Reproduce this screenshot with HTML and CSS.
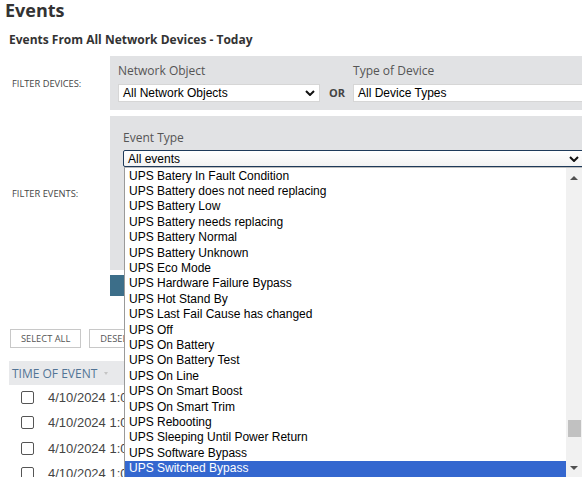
FILE: index.html
```html
<!DOCTYPE html>
<html>
<head>
<meta charset="utf-8">
<title>Events</title>
<link rel="stylesheet" href="styles.css">
</head>
<body>
<h1 class="title">Events</h1>
<h2 class="subtitle">Events From All Network Devices - Today</h2>

<div class="filter-row devices">
  <div class="filter-label">Filter Devices:</div>
  <div class="panel panel-devices">
    <div class="field field-net">
      <div class="field-label">Network Object</div>
      <div class="select"><span>All Network Objects</span>
        <svg class="chev" width="10" height="6" viewBox="0 0 10 6"><path d="M1 1 L5 5 L9 1" fill="none" stroke="#111" stroke-width="2"/></svg>
      </div>
    </div>
    <div class="or">OR</div>
    <div class="field field-type">
      <div class="field-label">Type of Device</div>
      <div class="select"><span>All Device Types</span></div>
    </div>
  </div>
</div>

<div class="filter-row events">
  <div class="filter-label tall">Filter Events:</div>
  <div class="events-col">
    <div class="panel panel-events">
      <div class="field-label">Event Type</div>
      <div class="select select-focus"><span>All events</span>
        <svg class="chev" width="10" height="6" viewBox="0 0 10 6"><path d="M1 1 L5 5 L9 1" fill="none" stroke="#111" stroke-width="2"/></svg>
      </div>
    </div>
    <div class="apply-btn"></div>
  </div>
</div>

<div class="actions">
  <div class="btn">Select All</div>
  <div class="btn">Deselect All</div>
</div>

<div class="table">
  <div class="thead"><span>Time of Event</span><span class="caret"></span></div>
  <div class="row"><span class="cb"></span><span class="time">4/10/2024 1:05 PM</span></div>
  <div class="row"><span class="cb"></span><span class="time">4/10/2024 1:04 PM</span></div>
  <div class="row"><span class="cb"></span><span class="time">4/10/2024 1:03 PM</span></div>
  <div class="row"><span class="cb"></span><span class="time">4/10/2024 1:02 PM</span></div>
</div>

<div class="dropdown">
  <ul class="list">
    <li class="item">UPS Batery In Fault Condition</li>
    <li class="item">UPS Battery does not need replacing</li>
    <li class="item">UPS Battery Low</li>
    <li class="item">UPS Battery needs replacing</li>
    <li class="item">UPS Battery Normal</li>
    <li class="item">UPS Battery Unknown</li>
    <li class="item">UPS Eco Mode</li>
    <li class="item">UPS Hardware Failure Bypass</li>
    <li class="item">UPS Hot Stand By</li>
    <li class="item">UPS Last Fail Cause has changed</li>
    <li class="item">UPS Off</li>
    <li class="item">UPS On Battery</li>
    <li class="item">UPS On Battery Test</li>
    <li class="item">UPS On Line</li>
    <li class="item">UPS On Smart Boost</li>
    <li class="item">UPS On Smart Trim</li>
    <li class="item">UPS Rebooting</li>
    <li class="item">UPS Sleeping Until Power Return</li>
    <li class="item">UPS Software Bypass</li>
    <li class="item selected">UPS Switched Bypass</li>
  </ul>
  <div class="sb">
    <div class="sb-btn"><span class="arrow-up"></span></div>
    <div class="sb-thumb"></div>
    <div class="sb-btn sb-down"><span class="arrow-down"></span></div>
  </div>
</div>
</body>
</html>
```

FILE: styles.css
```css
html, body {
  margin: 0;
  padding: 0;
  overflow: hidden;
  background: #fff;
}
body {
  width: 582px;
  height: 477px;
  position: relative;
  font-family: "Open Sans", "Liberation Sans", sans-serif;
  color: #333;
}
.title {
  margin: 0;
  padding-left: 5px;
  font-size: 18px;
  font-weight: 700;
  line-height: 22px;
  margin-top: -1px;
  color: #333;
}
.subtitle {
  margin: 11px 0 0;
  padding-left: 9px;
  font-size: 12px;
  font-weight: 700;
  line-height: 16px;
  color: #333;
}
.filter-row {
  display: flex;
  align-items: center;
}
.filter-row.devices { margin-top: 8px; }
.filter-row.events { margin-top: 6px; align-items: flex-start; }
.filter-label {
  width: 110px;
  flex: none;
  box-sizing: border-box;
  padding-left: 12px;
  font-size: 9.3px;
  color: #444;
  text-transform: uppercase;
}
.filter-label.tall {
  height: 154px;
  display: flex;
  align-items: center;
}
.panel { background: #e1e2e4; flex: none; }
.panel-devices {
  display: flex;
  align-items: flex-end;
  padding: 7px 0 8px 8px;
  width: 600px;
}
.field-label {
  font-size: 12px;
  line-height: 16px;
  color: #555;
  margin-bottom: 5px;
}
.select {
  height: 18px;
  box-sizing: border-box;
  background: #fff;
  border: 1px solid #d6d6d6;
  display: flex;
  align-items: center;
  justify-content: space-between;
  padding: 0 4px 0 4px;
  font-family: "Liberation Sans", Arial, sans-serif;
  font-size: 12px;
  color: #000;
  white-space: nowrap;
}
.field-net { width: 202px; }
.field-type { width: 260px; }
.or {
  font-weight: 700;
  font-size: 11px;
  color: #444;
  margin: 0 8px 0 9px;
  height: 18px;
  line-height: 18px;
}
.events-col { display: flex; flex-direction: column; }
.panel-events {
  height: 154px;
  box-sizing: border-box;
  padding: 14px 0 0 13px;
  width: 490px;
}
.panel-events .field-label { margin-bottom: 4px; }
.select-focus {
  width: 461px;
  height: 17px;
  border: 1px solid #1e3a5a;
  border-radius: 2px;
  background: linear-gradient(#ffffff, #f3f3f3);
}
.apply-btn {
  margin-top: 5px;
  width: 80px;
  height: 21px;
  background: #3c6e89;
}
.actions {
  display: flex;
  gap: 8px;
  padding-left: 10px;
  margin-top: 33px;
}
.btn {
  height: 19px;
  box-sizing: border-box;
  border: 1px solid #c8c8c8;
  background: #fff;
  font-size: 9.3px;
  line-height: 17px;
  color: #555;
  padding: 0 10px;
  text-transform: uppercase;
}
.table { margin-top: 13px; }
.thead {
  margin-left: 9px;
  height: 24px;
  background: #e8e9eb;
  display: flex;
  align-items: center;
  padding-left: 3px;
  font-size: 12px;
  color: #527496;
  text-transform: uppercase;
}
.caret {
  margin-left: 7px;
  width: 0;
  height: 0;
  border-left: 2.5px solid transparent;
  border-right: 2.5px solid transparent;
  border-top: 3px solid #c4c4c4;
}
.row {
  height: 25.3px;
  display: flex;
  align-items: center;
  padding-left: 21px;
}
.cb {
  width: 13px;
  height: 13px;
  box-sizing: border-box;
  border: 1px solid #555;
  border-radius: 2px;
  margin-right: 14px;
  background: #fff;
}
.time {
  font-family: "Liberation Sans", Arial, sans-serif;
  font-size: 13px;
  color: #444;
  white-space: nowrap;
}
.dropdown {
  position: absolute;
  left: 124px;
  top: 167px;
  width: 458px;
  height: 312px;
  box-sizing: border-box;
  display: flex;
  background: #fff;
  border-left: 1px solid #9a9a9a;
  border-top: 1px solid #bdbdbd;
}
.list {
  flex: 1;
  list-style: none;
  margin: 0;
  padding: 0;
  min-width: 0;
}
.item {
  height: 15.42px;
  line-height: 15.42px;
  padding-left: 4px;
  font-family: "Liberation Sans", Arial, sans-serif;
  font-size: 12px;
  color: #000;
  white-space: nowrap;
  overflow: hidden;
}
.item:first-child { margin-top: 0.5px; }
.item.selected {
  background: #3467cf;
  color: #fff;
}
.sb {
  width: 16px;
  flex: none;
  background: #f1f1f1;
  display: flex;
  flex-direction: column;
  align-items: center;
}
.sb-btn {
  height: 20px;
  width: 16px;
  display: flex;
  align-items: center;
  justify-content: center;
}
.sb-down { margin-top: auto; height: 22px; }
.arrow-up {
  width: 0; height: 0;
  border-left: 4px solid transparent;
  border-right: 4px solid transparent;
  border-bottom: 4px solid #505050;
}
.arrow-down {
  width: 0; height: 0;
  border-left: 4px solid transparent;
  border-right: 4px solid transparent;
  border-top: 4px solid #505050;
}
.sb-thumb {
  margin-top: 232px;
  width: 13px;
  height: 17px;
  background: #c1c1c1;
}
```
